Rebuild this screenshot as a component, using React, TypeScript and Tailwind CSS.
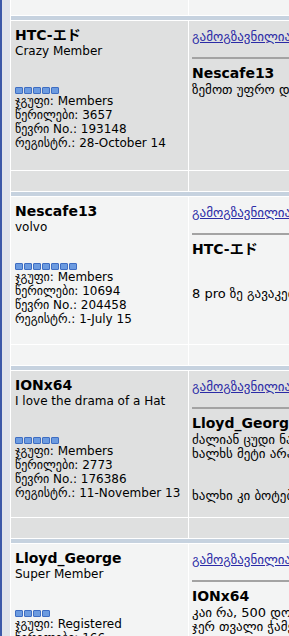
import { Fragment } from 'react';

interface Post {
  name: string;
  title: string;
  pips: number;
  group: string;
  count: string;
  no: string;
  reg: string;
  light: boolean;
  height: string;
  author: string;
  lines: string[];
}

const posts: Post[] = [
  {
    name: 'HTC-エド',
    title: 'Crazy Member',
    pips: 5,
    group: 'Members',
    count: '3657',
    no: '193148',
    reg: '28-October 14',
    light: false,
    height: 'h-[149px]',
    author: 'Nescafe13',
    lines: ['ზემოთ უფრო დაწვრილებით დავწერე'],
  },
  {
    name: 'Nescafe13',
    title: 'volvo',
    pips: 7,
    group: 'Members',
    count: '10694',
    no: '204458',
    reg: '1-July 15',
    light: true,
    height: 'h-[147px]',
    author: 'HTC-エド',
    lines: ['', '', '8 pro ზე გავაკეთე ეგ ყველაფერი'],
  },
  {
    name: 'IONx64',
    title: 'I love the drama of a Hat',
    pips: 5,
    group: 'Members',
    count: '2773',
    no: '176386',
    reg: '11-November 13',
    light: false,
    height: 'h-[146px]',
    author: 'Lloyd_George',
    lines: ['ძალიან ცუდი ნაბიჯია ეს', 'ხალხს მეტი არაფერი უნდა', '', '', 'ხალხი კი ბოტებია'],
  },
  {
    name: 'Lloyd_George',
    title: 'Super Member',
    pips: 4,
    group: 'Registered',
    count: '166',
    no: '214002',
    reg: '3-March 16',
    light: true,
    height: 'h-[146px]',
    author: 'IONx64',
    lines: ['კაი რა, 500 დოლარი ცოტაა', 'ჯერ თვალი ჭამეს და მერე'],
  },
];

function Pips({ n }: { n: number }) {
  return (
    <div className="flex gap-px mt-[29px] h-[7px]">
      {Array.from({ length: n }).map((_, i) => (
        <span key={i} className="w-2 h-[7px] bg-[#6c9be0] border border-[#3e6dc2] rounded-[1px]" />
      ))}
    </div>
  );
}

function PostRow({ p }: { p: Post }) {
  const bg = p.light ? 'bg-[#f3f4f4]' : 'bg-[#dfe0e0]';
  return (
    <>
      <div className={`flex gap-px shrink-0 ${p.height}`}>
        <div className={`w-[177px] shrink-0 ${bg} pl-1 pt-1.5 text-[12px] leading-[14px] whitespace-nowrap`}>
          <div className="text-[14px] leading-[17px] font-bold">{p.name}</div>
          <div>{p.title}</div>
          <Pips n={p.pips} />
          <div>ჯგუფი: {p.group}</div>
          <div>წერილები: {p.count}</div>
          <div>წევრი No.: {p.no}</div>
          <div>რეგისტრ.: {p.reg}</div>
        </div>
        <div className={`flex-1 min-w-[320px] ${bg} pl-[3px] pt-[3px] whitespace-nowrap`}>
          <a className="text-[13px] leading-[15px] text-[#2b2ba6] underline">
            გამოგზავნილია: 12 ნოემბერი 2015 - 14:22
          </a>
          <div className="mt-[9px] h-[2px] bg-[#a3a3a3]" />
          <div className="mt-[6px] text-[14px] leading-[17px] font-bold">{p.author}</div>
          <div className="mt-px text-[13px] leading-[14px]">
            {p.lines.map((l, i) => (
              <div key={i} className="h-[14px]">{l}</div>
            ))}
          </div>
        </div>
      </div>
      <div className="flex gap-px h-5 shrink-0">
        <div className={`w-[177px] shrink-0 ${bg}`} />
        <div className={`flex-1 ${bg}`} />
      </div>
      <div className="h-1 shrink-0 bg-[#c6d2df]" />
    </>
  );
}

export default function App() {
  return (
    <div className="flex w-[289px] h-[636px] overflow-hidden bg-[#dfe4ea] border-l-2 border-[#3b59a8] font-['DejaVu_Sans','Noto_Sans_CJK_JP',sans-serif] text-black">
      <div className="ml-2 pl-px bg-white flex-1 min-w-0 flex flex-col gap-px overflow-hidden">
        <div className="flex gap-px h-[15px] shrink-0">
          <div className="w-[177px] shrink-0 bg-[#f3f4f4]" />
          <div className="flex-1 bg-[#f3f4f4]" />
        </div>
        <div className="h-1 shrink-0 bg-[#c6d2df]" />
        {posts.map((p) => (
          <Fragment key={p.no}>
            <PostRow p={p} />
          </Fragment>
        ))}
      </div>
    </div>
  );
}
